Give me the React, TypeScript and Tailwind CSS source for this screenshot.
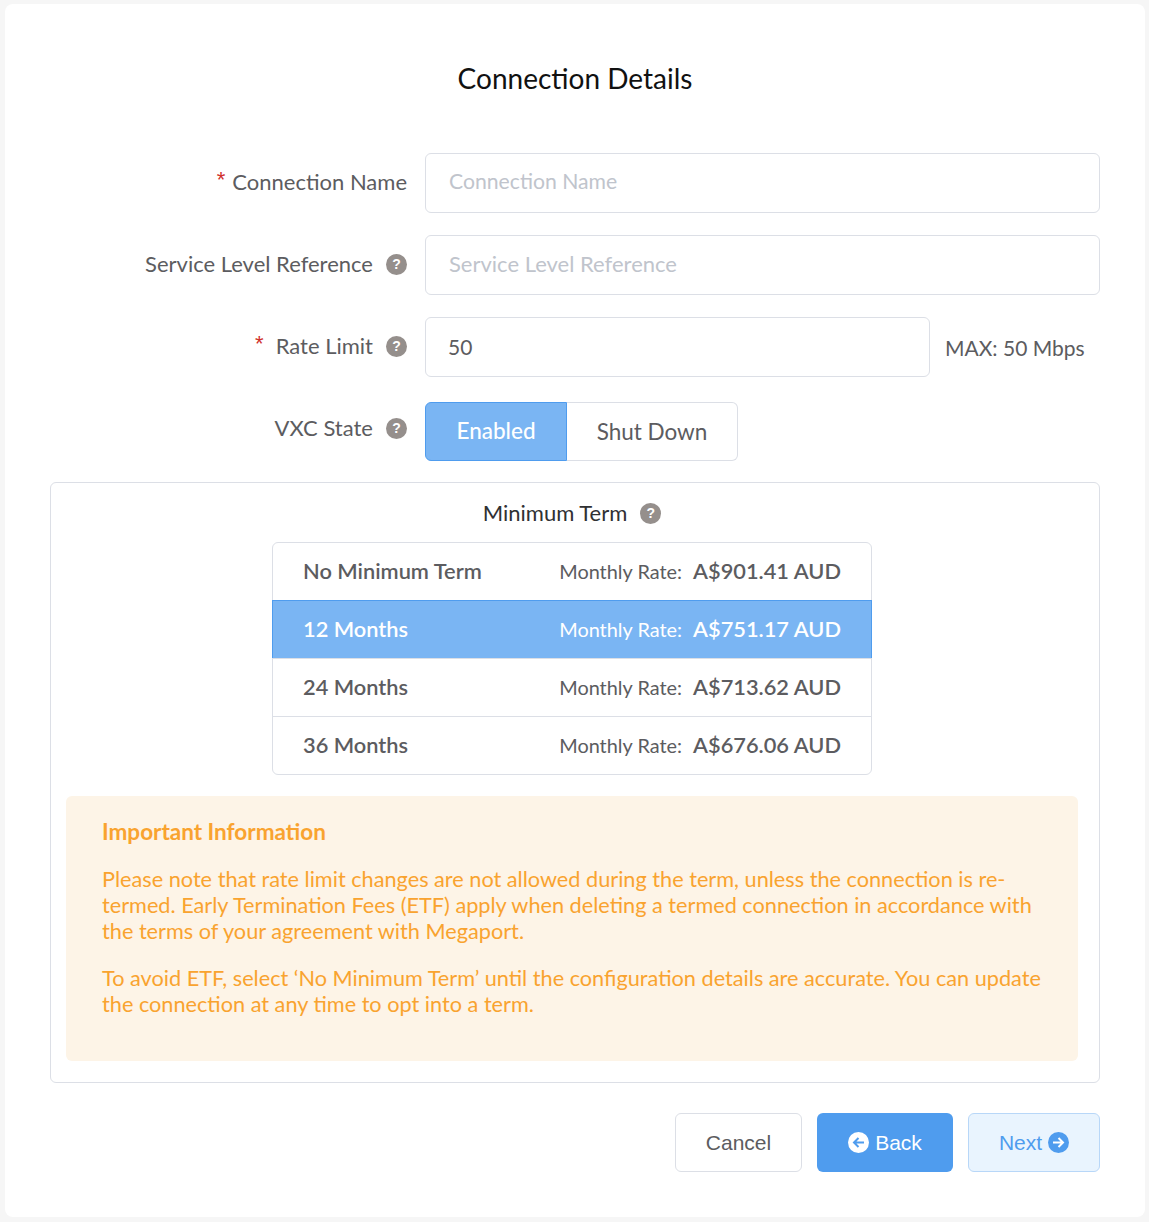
const font = "font-['Lato',sans-serif]";

const terms = [
  { name: "No Minimum Term", rate: "A$901.41 AUD" },
  { name: "12 Months", rate: "A$751.17 AUD", active: true },
  { name: "24 Months", rate: "A$713.62 AUD" },
  { name: "36 Months", rate: "A$676.06 AUD" },
];

function Help() {
  return (
    <span className="flex h-[21px] w-[21px] shrink-0 items-center justify-center rounded-full bg-[#958f8c] font-['Liberation_Sans',sans-serif] text-[14px] font-bold leading-none text-white">
      ?
    </span>
  );
}

function Star() {
  return (
    <span className="mt-[-3px] font-['Liberation_Sans',sans-serif] text-[22px] leading-none text-[#d0312d]">*</span>
  );
}

function ArrowCircle({ dir, bg, fg }: { dir: "left" | "right"; bg: string; fg: string }) {
  return (
    <svg width="21" height="21" viewBox="0 0 21 21" className="shrink-0">
      <circle cx="10.5" cy="10.5" r="10.5" fill={bg} />
      {dir === "left" ? (
        <path d="M16 10.5H6M10.500 6l-4.500 4.500 4.500 4.500" fill="none" stroke={fg} strokeWidth="2" />
      ) : (
        <path d="M5 10.5h10M10.500 6l4.500 4.500-4.500 4.500" fill="none" stroke={fg} strokeWidth="2" />
      )}
    </svg>
  );
}

function Row({ children, mb = "mb-[22px]" }: { children: React.ReactNode; mb?: string }) {
  return <div className={`flex items-start ${mb}`}>{children}</div>;
}

function Label({ children }: { children: React.ReactNode }) {
  return (
    <div className="flex h-[60px] w-[357px] shrink-0 items-center justify-end gap-[13px] pb-[2px] text-[22px] text-[#5c5c60]">
      {children}
    </div>
  );
}

export default function App() {
  return (
    <div className={`min-h-[1222px] bg-[#f6f6f6] pt-[4px] pl-[5px] pr-[4px] ${font}`}>
      <div className="h-[1213px] rounded-[8px] bg-white px-[45px] pt-[56px]">
        <h2 className="mb-[57px] text-center text-[28px] leading-[36px] text-[#111]">Connection Details</h2>

        <Row>
          <Label>
            <span className="flex items-center gap-[7px] pb-[2px]">
              <Star />
              Connection Name
            </span>
          </Label>
          <input
            placeholder="Connection Name"
            className="ml-[18px] h-[60px] flex-1 rounded-[6px] border border-[#dcdfe6] px-[23px] pb-[4px] text-[21.200px] outline-none placeholder:text-[#c0c4cc]"
          />
        </Row>
        <Row>
          <Label>
            <span className="pb-[2px]">Service Level Reference</span>
            <Help />
          </Label>
          <input
            placeholder="Service Level Reference"
            className="ml-[18px] h-[60px] flex-1 rounded-[6px] border border-[#dcdfe6] px-[23px] pb-[4px] text-[22px] outline-none placeholder:text-[#c0c4cc]"
          />
        </Row>
        <Row mb="mb-[25px]">
          <Label>
            <span className="flex items-center gap-[12px] pb-[2px]">
              <Star />
              Rate Limit
            </span>
            <Help />
          </Label>
          <input
            defaultValue="50"
            className="ml-[18px] h-[60px] w-[505px] rounded-[6px] border border-[#dcdfe6] px-[22px] pb-[2px] text-[21px] text-[#5c5c60] outline-none"
          />
          <span className="ml-[15px] flex h-[60px] items-center pt-[2px] text-[21px] text-[#5c5c60]">MAX: 50 Mbps</span>
        </Row>
        <Row mb="mb-[21px]">
          <div className="-mt-[4px] flex h-[60px] w-[357px] shrink-0 items-center justify-end gap-[13px] text-[22px] text-[#5c5c60]">
            <span className="pb-[2px]">VXC State</span>
            <Help />
          </div>
          <div className="ml-[18px] flex h-[59px] text-[22.500px]">
            <span className="flex w-[142px] items-center justify-center rounded-l-[6px] border border-[#4f9cee] bg-[#7ab5f3] pb-[2px] font-medium text-white">
              Enabled
            </span>
            <span className="flex w-[171px] items-center justify-center rounded-r-[6px] border border-l-0 border-[#dcdfe6] text-[#5c5c60]">
              Shut Down
            </span>
          </div>
        </Row>

        <div className="h-[601px] rounded-[6px] border border-[#dcdfe6] pl-[15px] pr-[21px] pt-[15px]">
          <div className="flex items-center justify-center gap-[13px] text-[22px] leading-[30px] text-[#303133]">
            Minimum Term
            <Help />
          </div>
          <div className="mx-auto mt-[14px] w-[600px] rounded-[6px] border border-[#dcdfe6]">
            {terms.map((t, i) => (
              <div
                key={t.name}
                className={`flex items-center justify-between px-[30px] ${i === 0 ? "h-[57px]" : "h-[58px]"} ${
                  t.active
                    ? "-mx-px border-x border-t border-[#4f9cee] bg-[#7ab5f3] text-white"
                    : `text-[#5c5c60] ${i > 1 ? "border-t border-[#dcdfe6]" : ""}`
                }`}
              >
                <span className="text-[21.800px] font-semibold">{t.name}</span>
                <span className="flex items-center gap-[11px]">
                  <span className="text-[19.900px]">Monthly Rate:</span>
                  <span className="text-[21.800px] font-semibold">{t.rate}</span>
                </span>
              </div>
            ))}
          </div>
          <div className="mt-[21px] h-[265px] rounded-[6px] bg-[#fdf4e7] pl-[36px] pr-[30px] pt-[23px] text-[21.700px] leading-[26px] text-[#f9a32f]">
            <p className="mb-[21px] text-[22.500px] font-bold">Important Information</p>
            <p className="mb-[21px]">
              Please note that rate limit changes are not allowed during the term, unless the connection is re-termed.
              Early Termination Fees (ETF) apply when deleting a termed connection in accordance with the terms of your
              agreement with Megaport.
            </p>
            <p>
              To avoid ETF, select ‘No Minimum Term’ until the configuration details are accurate. You can update the
              connection at any time to opt into a term.
            </p>
          </div>
        </div>

        <div className="mt-[30px] flex justify-end gap-[15px] font-['Liberation_Sans',sans-serif] text-[21px]">
          <button className="h-[59px] w-[127px] rounded-[6px] border border-[#dcdfe6] bg-white text-[#5c5c60]">
            Cancel
          </button>
          <button className="flex h-[59px] w-[136px] items-center justify-center gap-[6px] rounded-[6px] bg-[#4f9cee] text-white">
            <ArrowCircle dir="left" bg="#fff" fg="#4f9cee" />
            Back
          </button>
          <button className="flex h-[59px] w-[132px] items-center justify-center gap-[6px] rounded-[6px] border border-[#b8d7f8] bg-[#e9f4fe] text-[#4f9cee]">
            Next
            <ArrowCircle dir="right" bg="#4f9cee" fg="#fff" />
          </button>
        </div>
      </div>
    </div>
  );
}
